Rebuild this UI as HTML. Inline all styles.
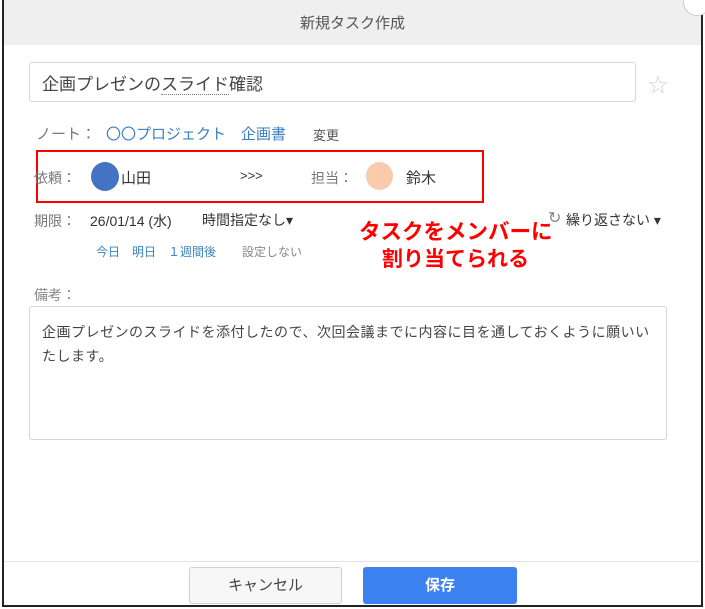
<!DOCTYPE html>
<html><head><meta charset="utf-8"><style>
*{margin:0;padding:0;box-sizing:border-box}
body{width:705px;height:609px;background:#fff;position:relative;overflow:hidden;font-family:"Liberation Sans","Noto Sans CJK JP",sans-serif;color:#555}
.a{position:absolute;white-space:nowrap}
</style></head><body>
<div class="a" style="left:2px;top:0;width:701px;height:607px;border:2px solid #222;border-top:none"></div>
<div class="a" style="left:4px;top:0;width:697px;height:45px;background:#efefef"></div>
<div class="a" style="left:0;top:12px;width:705px;text-align:center;font-size:15px;color:#555">新規タスク作成</div>
<div class="a" style="left:683px;top:-12px;width:28px;height:28px;border-radius:50%;border:1px solid #ccc;background:#fff"></div>
<div class="a" style="left:29px;top:62px;width:607px;height:40px;border:1px solid #d6d6d6;border-radius:3px"></div>
<div class="a" style="left:42px;top:70px;font-size:17px;color:#444">企画プレゼンの<span style="border-bottom:1px dotted #777">スライド</span>確認</div>
<div class="a" style="left:648px;top:69px;font-size:20px;color:#d4d4d4">☆</div>
<div class="a" style="left:36px;top:123px;font-size:15px;color:#777">ノート：</div>
<div class="a" style="left:106px;top:123px;font-size:15px;color:#3a7fc1">〇〇プロジェクト　企画書</div>
<div class="a" style="left:313px;top:125px;font-size:13px;color:#555">変更</div>
<div class="a" style="left:36px;top:150px;width:448px;height:53px;border:2px solid #f00"></div>
<div class="a" style="left:34px;top:168px;font-size:14px;color:#777">依頼：</div>
<div class="a" style="left:91px;top:162px;width:28px;height:29px;border-radius:50%;background:#4472c4"></div>
<div class="a" style="left:121px;top:167px;font-size:15px;color:#333">山田</div>
<div class="a" style="left:240px;top:168px;font-size:13px;color:#333">&gt;&gt;&gt;</div>
<div class="a" style="left:311px;top:168px;font-size:14px;color:#777">担当：</div>
<div class="a" style="left:366px;top:162px;width:27px;height:28px;border-radius:50%;background:#f8cbad"></div>
<div class="a" style="left:406px;top:167px;font-size:15px;color:#333">鈴木</div>
<div class="a" style="left:34px;top:211px;font-size:14px;color:#777">期限：</div>
<div class="a" style="left:90px;top:211px;font-size:14px;color:#333">26/01/14 (水)</div>
<div class="a" style="left:202px;top:210px;font-size:14px;color:#333">時間指定なし▾</div>
<div class="a" style="left:548px;top:208px;font-size:16px;color:#888">↻</div>
<div class="a" style="left:566px;top:210px;font-size:14px;color:#333">繰り返さない ▾</div>
<div class="a" style="left:96px;top:243px;font-size:12px;color:#3a7fc1">今日　明日　１週間後</div>
<div class="a" style="left:242px;top:243px;font-size:12px;color:#888">設定しない</div>
<div class="a" style="left:359px;top:215px;font-size:21.5px;font-weight:bold;color:#f00">タスクをメンバーに</div>
<div class="a" style="left:382px;top:243px;font-size:21px;font-weight:bold;color:#f00">割り当てられる</div>
<div class="a" style="left:34px;top:285px;font-size:14px;color:#888">備考：</div>
<div class="a" style="left:29px;top:306px;width:638px;height:134px;border:1px solid #d6d6d6;border-radius:3px"></div>
<div class="a" style="left:42px;top:320px;font-size:14px;color:#444;line-height:24px;letter-spacing:0.5px">企画プレゼンのスライドを添付したので、次回会議までに内容に目を通しておくように願いい<br>たします。</div>
<div class="a" style="left:4px;top:561px;width:697px;height:1px;background:#e2e2e2"></div>
<div class="a" style="left:189px;top:567px;width:153px;height:37px;border:1px solid #d0d0d0;border-radius:3px;background:#f7f7f7;text-align:center;line-height:35px;font-size:15px;color:#444">キャンセル</div>
<div class="a" style="left:363px;top:567px;width:154px;height:37px;border-radius:3px;background:#3b82f0;text-align:center;line-height:37px;font-size:15px;color:#fff;font-weight:bold">保存</div>
</body></html>
